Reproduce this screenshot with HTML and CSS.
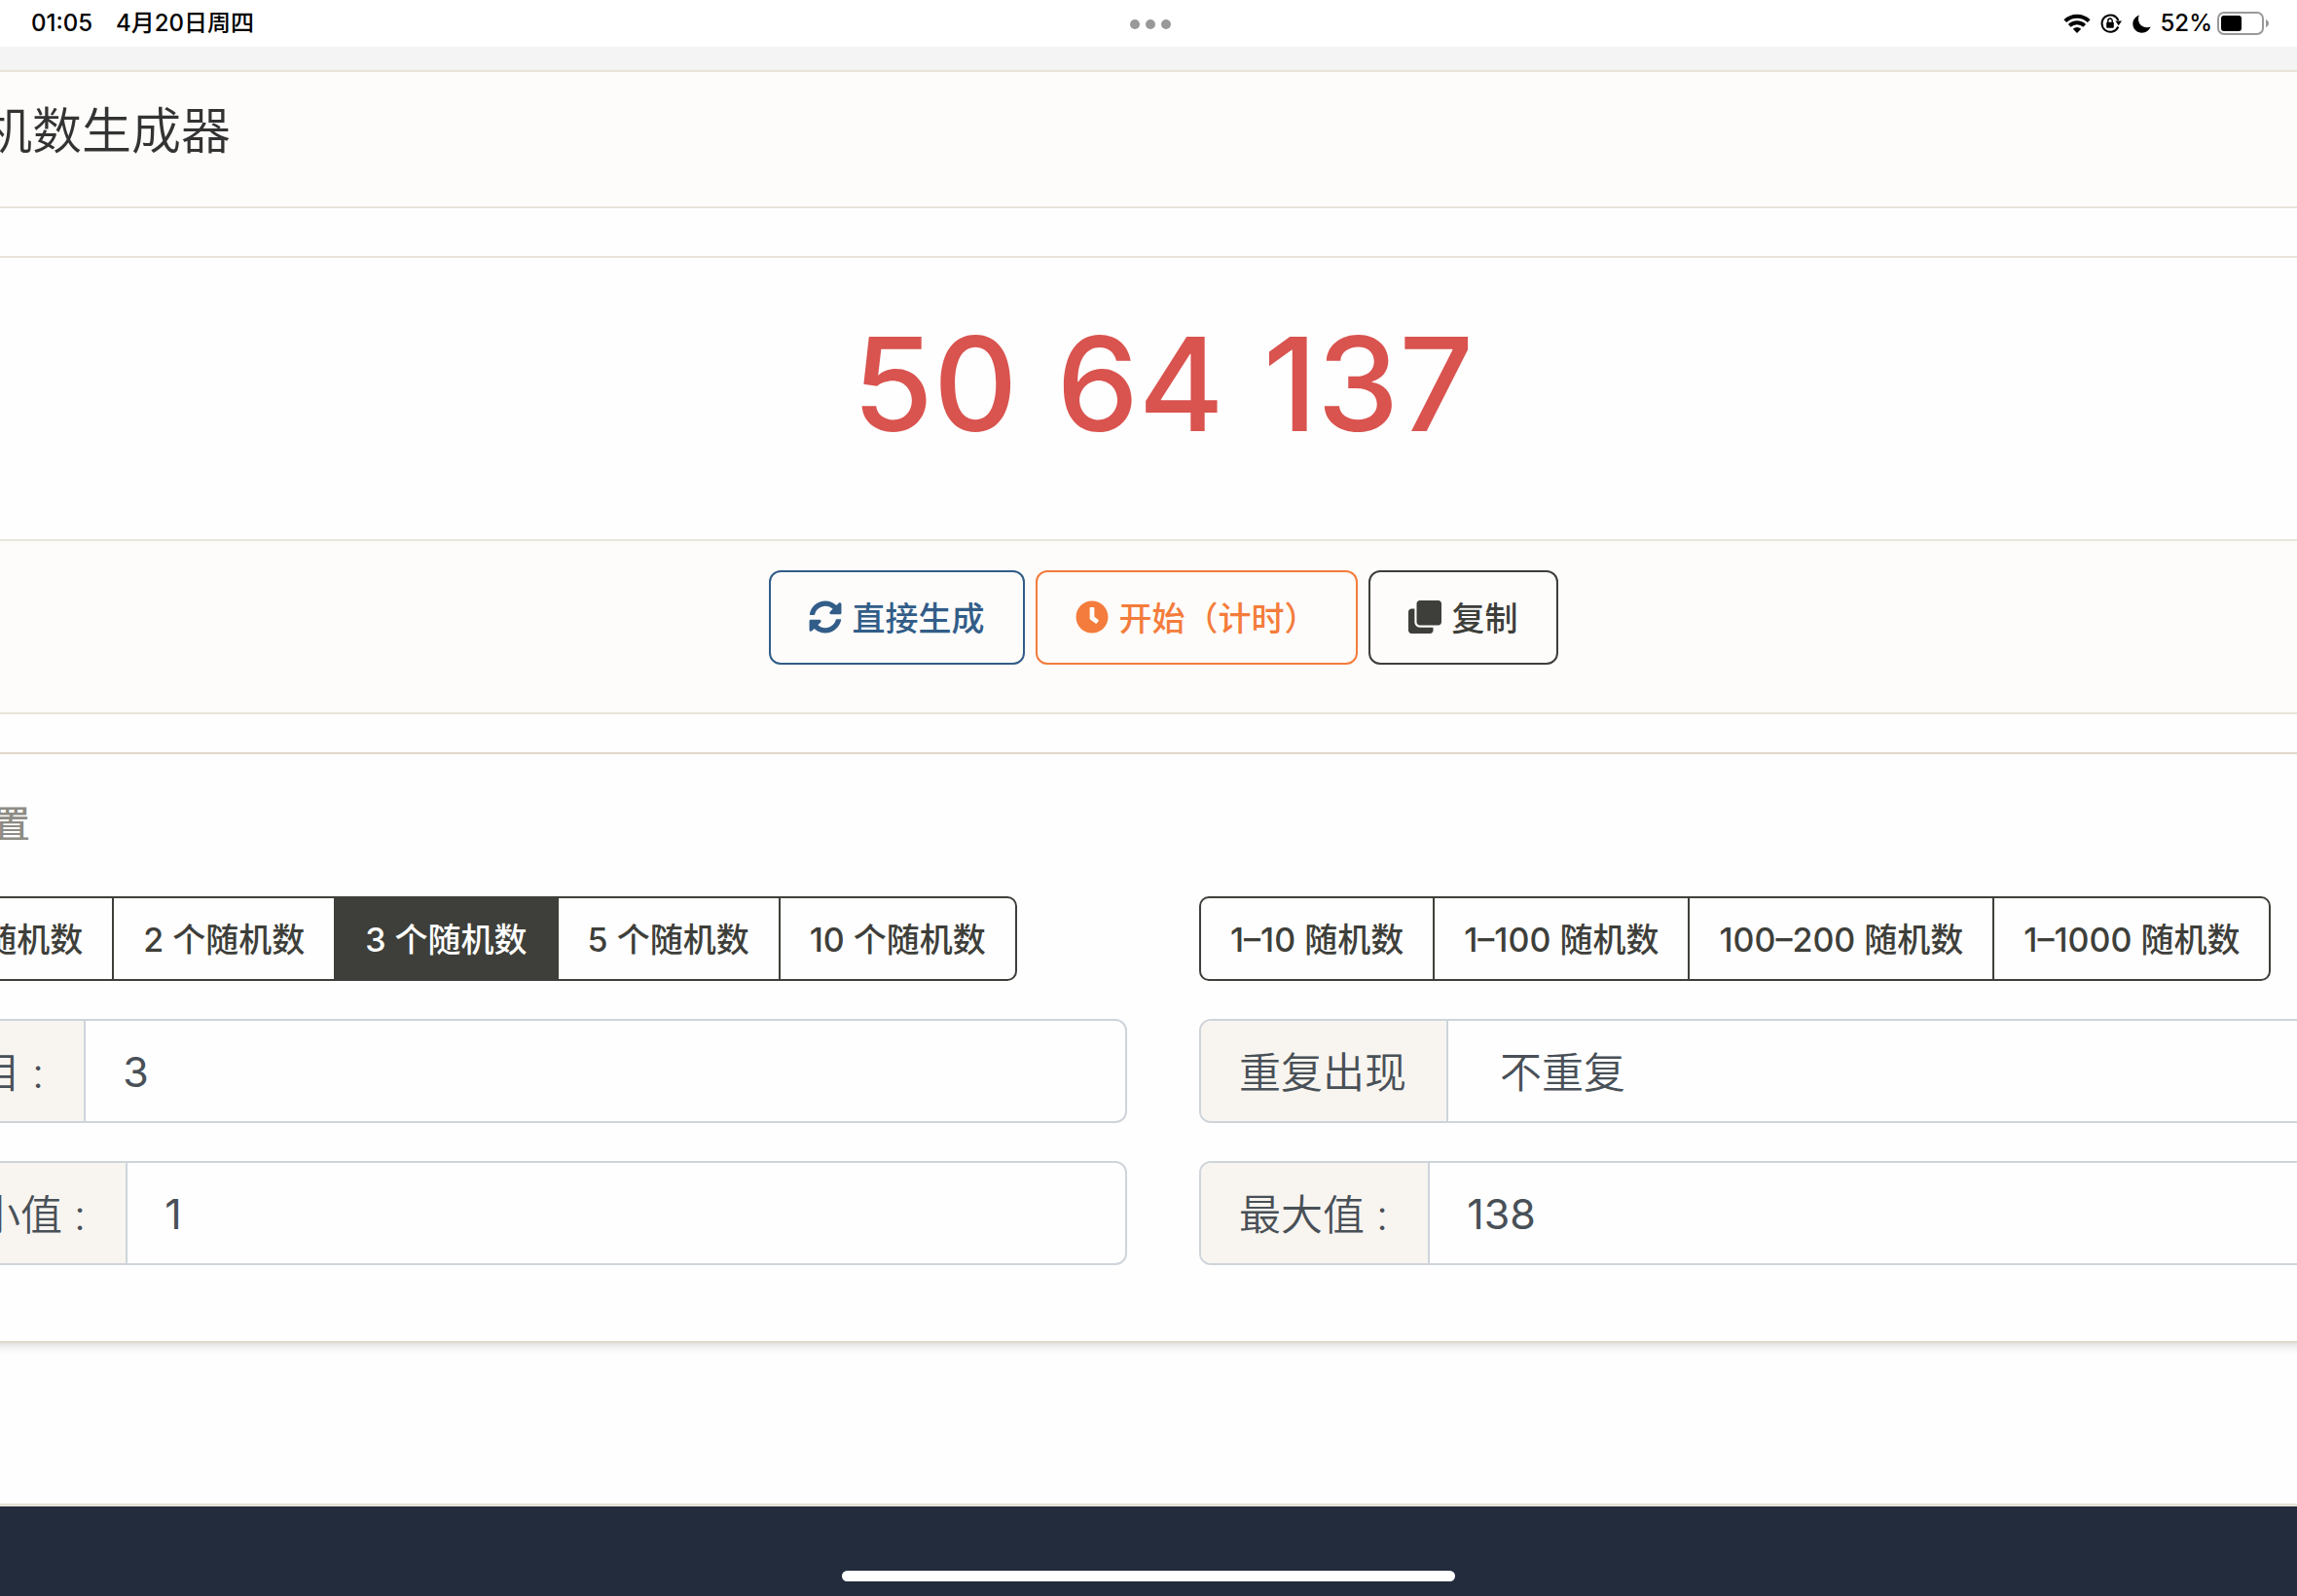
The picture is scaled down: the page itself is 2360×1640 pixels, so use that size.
FILE: index.html
```html
<!DOCTYPE html>
<html lang="zh-CN">
<head>
<meta charset="utf-8">
<meta name="viewport" content="width=device-width, initial-scale=1">
<title>随机数生成器</title>
<link rel="stylesheet" href="styles.css">
</head>
<body>
<header class="statusbar">
  <div class="status-left"><time>01:05</time><span>4月20日周四</span></div>
  <div class="dots"><i></i><i></i><i></i></div>
  <div class="status-right">
    <svg class="wifi" viewBox="0 0 28 20" aria-hidden="true"><g fill="none" stroke="#000" stroke-width="4"><path d="M1.800 7.600A17.500 17.500 0 0 1 26.200 7.600"/><path d="M6.300 12.400A11 11 0 0 1 21.700 12.400"/></g><path d="M14 20l-4.200-4.300a6 6 0 0 1 8.400 0z"/></svg>
    <svg class="lock" viewBox="0 0 22 20" aria-hidden="true"><path d="M18.300 13.500A8.700 8.700 0 1 1 18.400 7" fill="none" stroke="#000" stroke-width="2"/><path d="M15.400 7.600h6.600l-3.300 4.600z"/><rect x="6.200" y="8.800" width="7.600" height="6" rx="1"/><path d="M7.800 9V7.200a2.200 2.200 0 0 1 4.400 0V9" fill="none" stroke="#000" stroke-width="1.400"/></svg>
    <svg class="moon" viewBox="0 0 19 19" aria-hidden="true"><path d="M6.800.4C3 1.900.3 5.300.3 9.400c0 5.200 4.200 9.300 9.400 9.300 4 0 7.500-2.500 8.900-6.200-1.100.5-2.400.8-3.700.8-5 0-8.900-3.900-8.900-8.800 0-1.500.3-2.900.8-4.100z"/></svg>
    <span class="percent">52%</span>
    <svg class="battery" viewBox="0 0 54 24" aria-hidden="true"><rect x="1" y="1" width="46" height="22" rx="6" fill="none" stroke="#999" stroke-width="2"/><rect x="4" y="4" width="21" height="16" rx="3"/><path d="M50 8c4 1.500 4 6.500 0 8z" fill="#999"/></svg>
  </div>
</header>

<div class="viewport">
<main class="page">
  <section class="title-band"><h1>随机数生成器</h1></section>

  <section class="result">
    <div class="numbers"><span>50</span><span>64</span><span>137</span></div>
    <div class="actions">
      <button type="button" class="action blue">
        <svg viewBox="0 0 512 512" aria-hidden="true"><path d="M370.720 133.280C339.458 104.008 298.888 87.962 255.848 88c-77.458.068-144.328 53.178-162.791 126.850-1.344 5.363-6.122 9.150-11.651 9.150H24.103c-7.498 0-13.194-6.807-11.807-14.176C33.933 94.924 134.813 8 256 8c66.448 0 126.791 26.136 171.315 68.685L463.030 40.970C478.149 25.851 504 36.559 504 57.941V192c0 13.255-10.745 24-24 24H345.941c-21.382 0-32.090-25.851-16.971-40.971l41.750-41.749zM32 296h134.059c21.382 0 32.090 25.851 16.971 40.971l-41.750 41.750c31.262 29.273 71.835 45.319 114.876 45.280 77.418-.070 144.315-53.144 162.787-126.849 1.344-5.363 6.122-9.150 11.651-9.150h57.304c7.498 0 13.194 6.807 11.807 14.176C478.067 417.076 377.187 504 256 504c-66.448 0-126.791-26.136-171.315-68.685L48.970 471.030C33.851 486.149 8 475.441 8 454.059V320c0-13.255 10.745-24 24-24z"/></svg>
        <span>直接生成</span>
      </button>
      <button type="button" class="action orange">
        <svg viewBox="0 0 512 512" aria-hidden="true"><path d="M256 8C119 8 8 119 8 256s111 248 248 248 248-111 248-248S393 8 256 8zm57.100 350.100L224.900 294c-3.100-2.300-4.900-5.900-4.900-9.700V116c0-6.600 5.400-12 12-12h48c6.600 0 12 5.400 12 12v137.700l63.500 46.200c5.400 3.900 6.500 11.400 2.600 16.800l-28.200 38.800c-3.900 5.300-11.400 6.500-16.800 2.600z"/></svg>
        <span>开始（计时）</span>
      </button>
      <button type="button" class="action dark">
        <svg viewBox="0 0 512 512" aria-hidden="true"><path d="M464 0c26.510 0 48 21.490 48 48v288c0 26.510-21.490 48-48 48H176c-26.510 0-48-21.490-48-48V48c0-26.510 21.490-48 48-48h288M176 416c-44.112 0-80-35.888-80-80V128H48c-26.510 0-48 21.490-48 48v288c0 26.510 21.490 48 48 48h288c26.510 0 48-21.490 48-48v-48H176z"/></svg>
        <span>复制</span>
      </button>
    </div>
  </section>

  <section class="settings">
    <h2>设置</h2>
    <div class="grid">
      <div class="choices">
        <button type="button">1 个随机数</button>
        <button type="button">2 个随机数</button>
        <button type="button" class="active">3 个随机数</button>
        <button type="button">5 个随机数</button>
        <button type="button">10 个随机数</button>
      </div>
      <div class="choices">
        <button type="button">1–10 随机数</button>
        <button type="button">1–100 随机数</button>
        <button type="button">100–200 随机数</button>
        <button type="button">1–1000 随机数</button>
      </div>
      <div class="field"><label for="count">数目 :</label><input id="count" type="text" value="3"></div>
      <div class="field"><label for="repeat">重复出现</label><select id="repeat"><option>不重复</option></select></div>
      <div class="field"><label for="min">最小值 :</label><input id="min" type="text" value="1"></div>
      <div class="field"><label for="max">最大值 :</label><input id="max" type="text" value="138"></div>
    </div>
  </section>
</main>
</div>

<footer class="footer"><div class="home"></div></footer>
</body>
</html>
```
FILE: styles.css
```css
* { box-sizing: border-box; }

body {
  margin: 0;
  min-height: 100vh;
  display: flex;
  flex-direction: column;
  background: #fefefe;
  color: #333;
  font-family: Inter, "Noto Sans CJK SC", sans-serif;
}

button, input, select { font: inherit; margin: 0; }

.statusbar {
  height: 48px;
  padding: 0 28px 0 32px;
  display: grid;
  grid-template-columns: 1fr auto 1fr;
  align-items: center;
  background: #fff;
  color: #000;
  font-size: 24px;
  line-height: 32px;
  font-weight: 500;
}
.status-left { display: flex; gap: 24px; }
.status-right { display: flex; align-items: center; justify-content: flex-end; }
.dots { display: flex; gap: 6px; padding-top: 2px; }
.dots i { width: 10px; height: 10px; border-radius: 50%; background: #999; }
.wifi { width: 28px; height: 20px; margin-right: 10px; }
.lock { width: 22px; height: 20px; margin-right: 11px; }
.moon { width: 19px; height: 19px; margin-right: 10px; }
.percent { margin-right: 5px; }
.battery { width: 54px; height: 24px; }

/* The zoomed page runs past both sides of the window. */
.viewport { flex: 1; overflow: hidden; }
.page { margin: 0 -136px 0 -106px; }

.title-band {
  margin-bottom: 49px;
  padding: 0 37px;
  border-top: 24px solid #f4f4f4;
  border-bottom: 2px solid #e8e4da;
  background: #fdfcfa;
  box-shadow: inset 0 2px #e8e4da;
}
.title-band h1 {
  margin: 0;
  padding: 25px 0 39px;
  font-size: 51px;
  line-height: 76px;
  font-weight: 350;
}

.result {
  margin-bottom: 39px;
  border-top: 2px solid #e8e4da;
  border-bottom: 2px solid #e8e4da;
}
.numbers {
  padding: 48px 0 79px;
  display: flex;
  justify-content: center;
  gap: 40px;
  color: #d9534f;
  font-size: 134px;
  line-height: 162px;
  font-weight: 550;
}
.actions {
  padding: 30px 0 49px;
  border-top: 2px solid #e8e4da;
  background: #fdfcfa;
  display: flex;
  justify-content: center;
  gap: 11px;
}
.action {
  height: 97px;
  padding: 0 39px 2px;
  display: flex;
  align-items: center;
  gap: 11px;
  border: 2px solid currentColor;
  border-radius: 12px;
  background: transparent;
  font-size: 34px;
  font-weight: 500;
}
.action svg { width: 34px; height: 34px; fill: currentColor; }
.blue { color: #325d88; }
.orange { color: #f47c3c; }
.dark { color: #3e3f3a; }

.settings {
  padding: 42px 0 78px;
  border-top: 2px solid #dfd7ca;
  border-bottom: 2px solid #dfd7ca;
  box-shadow: 0 8px 10px -6px rgba(0, 0, 0, .16);
}
.settings h2 {
  margin: 0 0 46px 61px;
  color: #8e8c84;
  font-size: 38px;
  line-height: 58px;
  font-weight: 500;
}
.grid {
  display: grid;
  grid-template-columns: 1fr 1fr;
  gap: 39px 74px;
}
.choices { display: flex; }
.choices button {
  height: 87px;
  padding: 0 30px 2px;
  border: 2px solid #3e3f3a;
  background: transparent;
  color: #3e3f3a;
  font-size: 34px;
  font-weight: 500;
  white-space: nowrap;
}
.choices button + button { margin-left: -2px; }
.choices button:first-child { border-radius: 10px 0 0 10px; }
.choices button:last-child { border-radius: 0 10px 10px 0; }
.choices .active { background: #3e3f3a; color: #fff; }

.field {
  height: 107px;
  display: flex;
  border: 2px solid #ced4da;
  border-radius: 12px;
  overflow: hidden;
  color: #495057;
  font-size: 43px;
  font-weight: 350;
}
.field label {
  padding: 0 41px 4px 39px;
  display: flex;
  align-items: center;
  border-right: 2px solid #ced4da;
  background: #f8f5f0;
  white-space: pre;
}
.field input, .field select {
  flex: 1;
  min-width: 0;
  padding: 0 38px;
  border: 0;
  background: transparent;
  color: inherit;
  appearance: none;
}
.field input { font-weight: 400; }
.field select { padding: 2px 53px 0; }

.footer {
  height: 95px;
  padding-bottom: 15px;
  border-top: 3px solid #e4e1d6;
  background: #232c3d;
  display: flex;
  align-items: flex-end;
  justify-content: center;
}
.home { width: 630px; max-width: 60%; height: 11px; border-radius: 6px; background: #fff; }
```
